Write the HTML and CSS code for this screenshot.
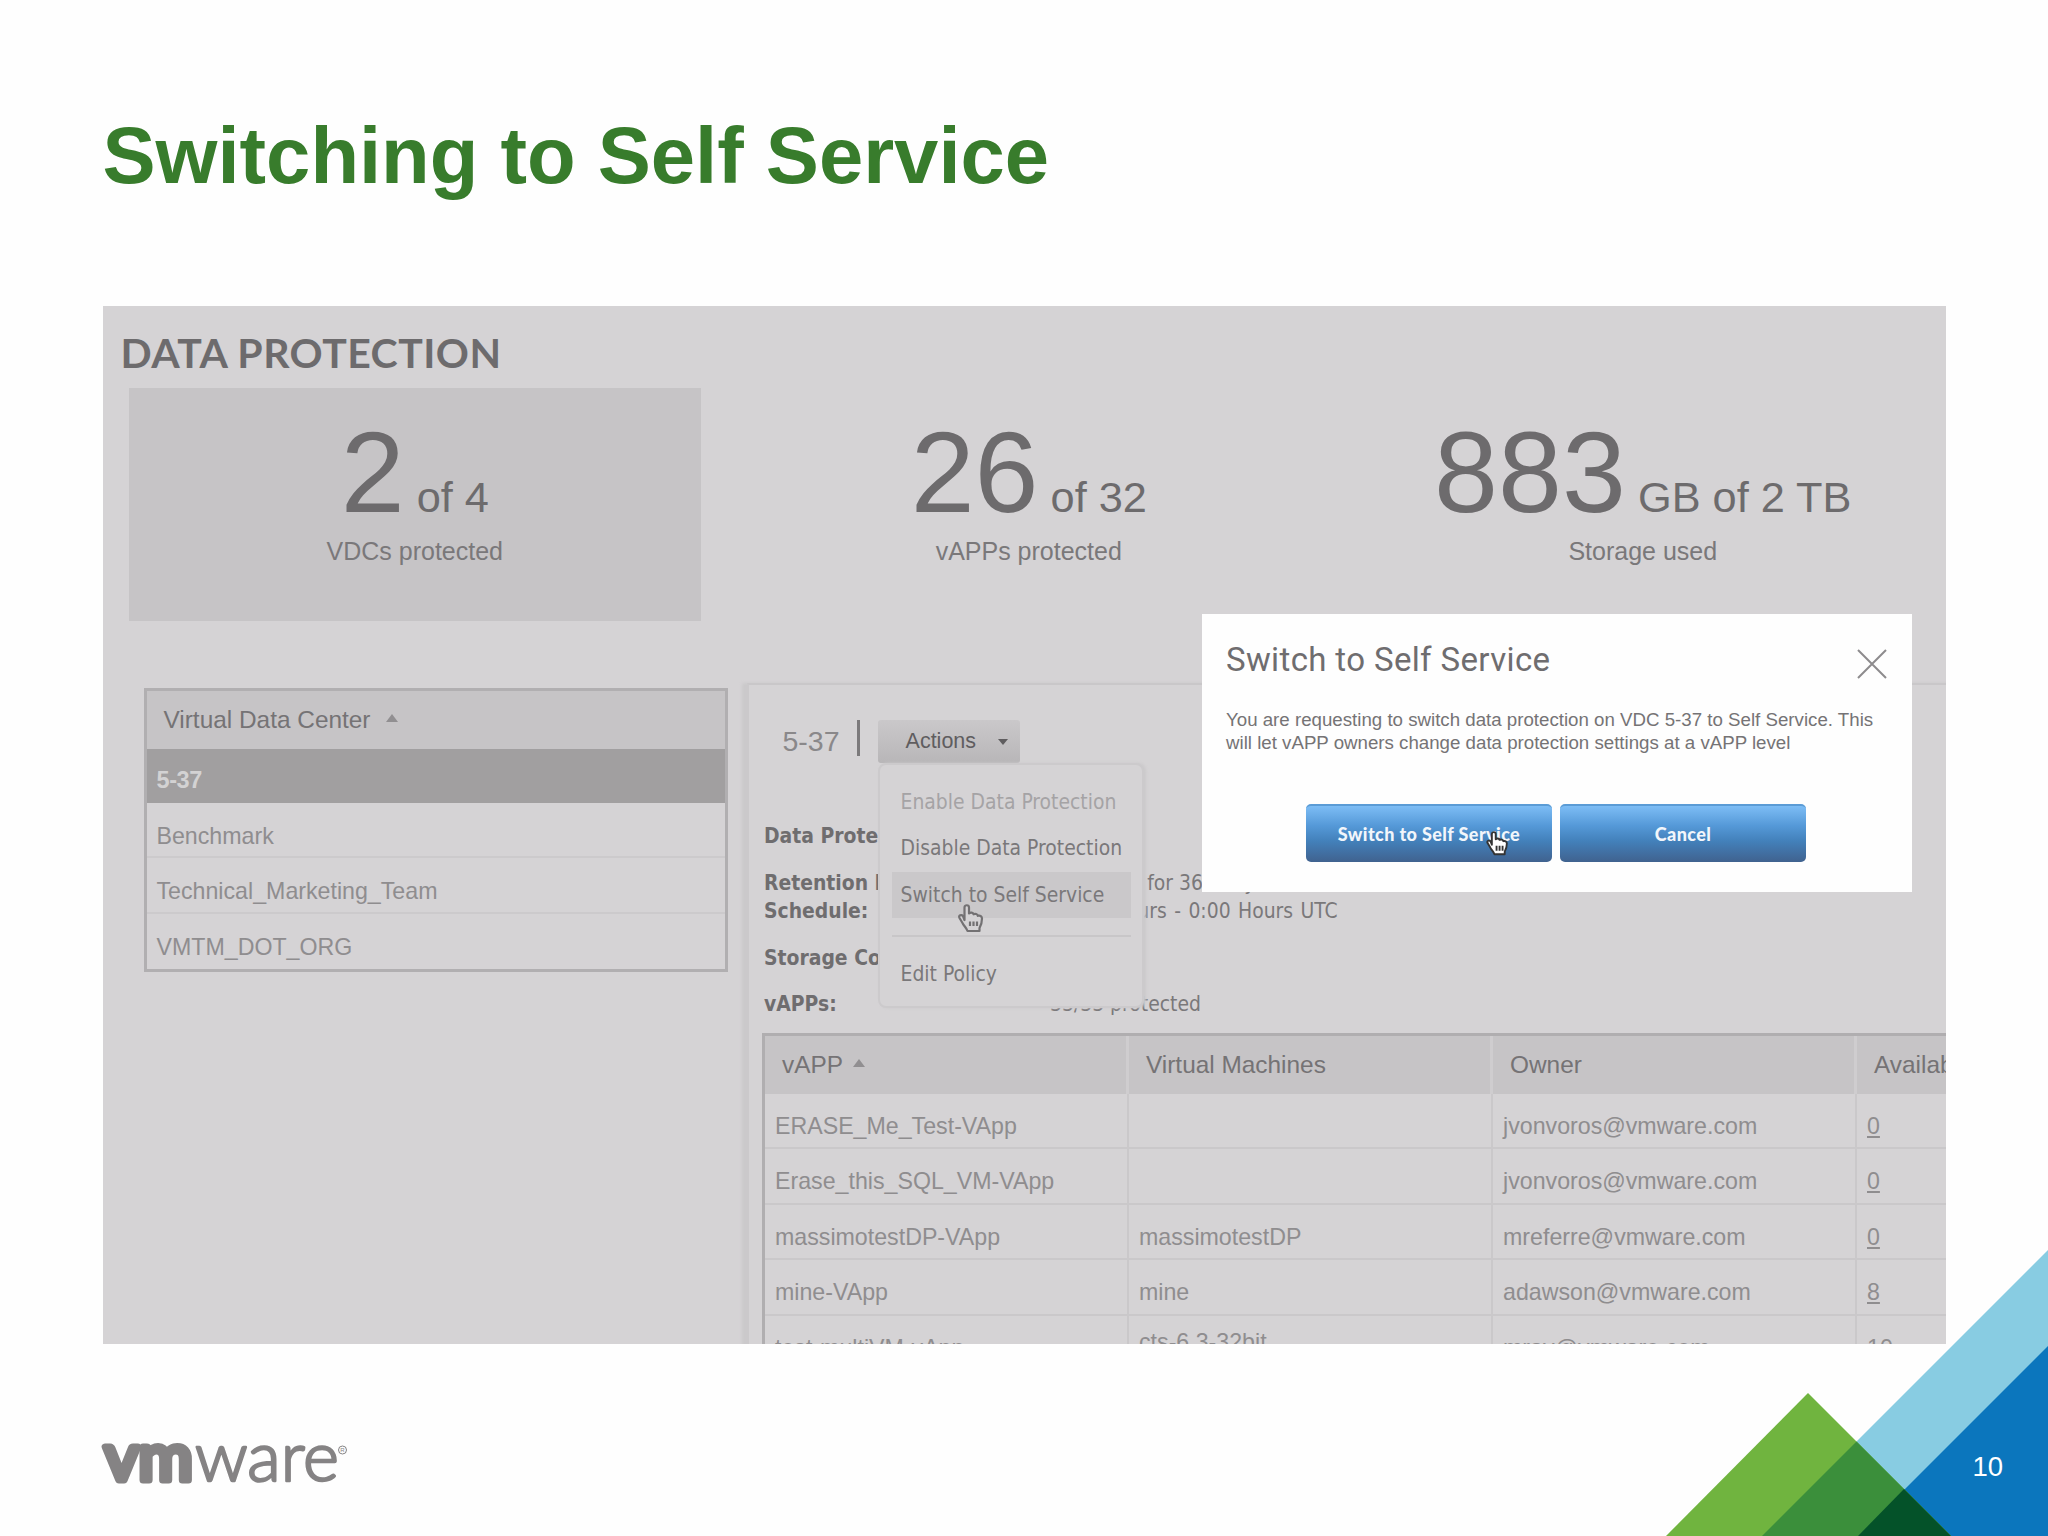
FILE: index.html
```html
<!DOCTYPE html>
<html lang="en">
<head>
    <meta charset="UTF-8">
    <meta name="viewport" content="width=device-width, initial-scale=1.0">
    <title>Switching to Self Service</title>
    <link rel="stylesheet" href="styles.css">
</head>
<body>
    <div class="slide">
        <h1 class="slide-title">Switching to Self Service</h1>

        <div class="screen">
            <h2 class="screen-title">DATA PROTECTION</h2>

            <div class="stats">
                <div class="stat active">
                    <div class="stat-value"><span class="big">2</span> of 4</div>
                    <div class="stat-label">VDCs protected</div>
                </div>
                <div class="stat">
                    <div class="stat-value"><span class="big">26</span> of 32</div>
                    <div class="stat-label">vAPPs protected</div>
                </div>
                <div class="stat">
                    <div class="stat-value"><span class="big">883</span> GB of 2 TB</div>
                    <div class="stat-label">Storage used</div>
                </div>
            </div>

            <div class="content">
                <div class="vdc-list">
                    <div class="vdc-header">Virtual Data Center <span class="sort"></span></div>
                    <div class="vdc-row selected">5-37</div>
                    <div class="vdc-row">Benchmark</div>
                    <div class="vdc-row">Technical_Marketing_Team</div>
                    <div class="vdc-row">VMTM_DOT_ORG</div>
                </div>

                <div class="panel">
                    <div class="panel-head">
                        <span class="vdc-name">5-37</span>
                        <span class="bar"></span>
                        <div class="dropdown">
                            <button type="button" class="actions-btn">Actions <span class="caret"></span></button>
                            <ul class="menu">
                                <li class="disabled">Enable Data Protection</li>
                                <li>Disable Data Protection</li>
                                <li class="hover">Switch to Self Service
                                    <svg class="cursor cursor-menu" viewBox="0 0 28 31">
                                        <path class="hand-dim" d="M8 17V4.500c0-3 4.500-3 4.500 0v6c1.500-1.500 4-1 4.500.8 1.500-1 4-.3 4.300 1.500 2-.8 4.200.3 4.200 2.700 0 4-.5 6-2.500 9.500V28H11c-1-3-3.500-5-5-8l-3-5c-1.200-2.500 1.800-4 3.500-2z"/>
                                        <path class="hand-dim" d="M13.500 18.500v4.500M17 18.500v4.500M20.500 18.500v4.500"/>
                                    </svg>
                                </li>
                                <li class="divider"></li>
                                <li>Edit Policy</li>
                            </ul>
                        </div>
                    </div>

                    <div class="details">
                        <div class="detail"><b>Data Protection:</b><span>Enabled</span></div>
                        <div class="detail-group">
                            <div class="detail retention"><b>Retention Policy:</b><span>Retained for 365 days</span></div>
                            <div class="detail schedule"><b>Schedule:</b><span>20:00 Hours - 0:00 Hours UTC</span></div>
                        </div>
                        <div class="detail"><b>Storage Consumed:</b><span></span></div>
                        <div class="detail"><b>vAPPs:</b><span>33/33 protected</span></div>
                    </div>

                    <table class="vapps">
                        <thead>
                            <tr>
                                <th>vAPP <span class="sort"></span></th>
                                <th>Virtual Machines</th>
                                <th>Owner</th>
                                <th>Available</th>
                            </tr>
                        </thead>
                        <tbody>
                            <tr><td>ERASE_Me_Test-VApp</td><td></td><td>jvonvoros@vmware.com</td><td><u>0</u></td></tr>
                            <tr><td>Erase_this_SQL_VM-VApp</td><td></td><td>jvonvoros@vmware.com</td><td><u>0</u></td></tr>
                            <tr><td>massimotestDP-VApp</td><td>massimotestDP</td><td>mreferre@vmware.com</td><td><u>0</u></td></tr>
                            <tr><td>mine-VApp</td><td>mine</td><td>adawson@vmware.com</td><td><u>8</u></td></tr>
                            <tr><td>test-multiVM-vApp</td><td class="two-line">cts-6.3-32bit</td><td>mray@vmware.com</td><td><u>10</u></td></tr>
                        </tbody>
                    </table>
                </div>
            </div>

            <div class="dialog">
                <div class="dialog-head">
                    <h3>Switch to Self Service</h3>
                    <svg class="close" viewBox="0 0 30 30"><path d="M1 1L29 29M29 1L1 29"/></svg>
                </div>
                <p>You are requesting to switch data protection on VDC 5-37 to Self Service. This<br>will let vAPP owners change data protection settings at a vAPP level</p>
                <div class="dialog-buttons">
                    <button type="button" class="btn">Switch to Self Service
                        <svg class="cursor cursor-btn" viewBox="0 0 28 31">
                            <path class="hand" d="M8 17V4.500c0-3 4.500-3 4.500 0v6c1.500-1.500 4-1 4.500.8 1.500-1 4-.3 4.300 1.500 2-.8 4.200.3 4.200 2.700 0 4-.5 6-2.500 9.500V28H11c-1-3-3.500-5-5-8l-3-5c-1.200-2.500 1.800-4 3.500-2z"/>
                            <path class="hand" d="M13.500 18v6M17 18v6M20.500 18v6"/>
                        </svg>
                    </button>
                    <button type="button" class="btn">Cancel</button>
                </div>
            </div>
        </div>

        <svg class="logo" viewBox="0 0 250 50">
            <text class="logo-vm" x="4.500" y="40" textLength="88" lengthAdjust="spacingAndGlyphs">vm</text>
            <text class="logo-ware" x="95" y="41" textLength="144" lengthAdjust="spacingAndGlyphs">ware</text>
            <circle class="logo-ring" cx="242.500" cy="10" r="4"/>
            <text class="logo-reg" x="242.500" y="12.200">R</text>
        </svg>

        <div class="corner">
            <svg viewBox="0 0 382 286">
                <polygon class="sky" points="382,0 382,286 96,286"/>
                <polygon class="blue" points="382,96 382,286 192,286"/>
                <polygon class="green" points="142,143 0,286 285,286"/>
                <polygon class="mid" points="190.500,191.500 96,286 285,286"/>
                <polygon class="dark" points="238,239 192,286 285,286"/>
            </svg>
            <span class="page-number">10</span>
        </div>
    </div>
</body>
</html>
```
FILE: styles.css
```css
* {
    box-sizing: border-box;
}
body {
    margin: 0;
    background-color: #fefefe;
    font-family: "Liberation Sans", Arial, sans-serif;
}
h1, h2, h3, p, ul {
    margin: 0;
    padding: 0;
}
.slide {
    position: relative;
    width: 2048px;
    height: 1536px;
    padding: 110px 102px 0;
    overflow: hidden;
}
.slide-title {
    padding-left: 0.5px;
    font-size: 79.6px;
    line-height: 92px;
    color: #387c2c;
}

/* application screen */
.screen {
    position: relative;
    width: 1843px;
    height: 1038px;
    margin: 104px 0 0 0.5px;
    padding-top: 23px;
    background-color: #d5d3d5;
    overflow: hidden;
}
.screen-title {
    margin: 0 0 10.5px 18px;
    font-family: Lato, sans-serif;
    font-size: 41px;
    line-height: 48px;
    letter-spacing: 0.45px;
    color: #6d6b6d;
}
.stats {
    display: grid;
    grid-template-columns: repeat(3, 571.5px);
    gap: 42.5px;
    margin-left: 26.5px;
}
.stat {
    height: 233px;
    padding-top: 26.5px;
    text-align: center;
}
.stat.active {
    background-color: #c6c4c6;
}
.stat-value {
    font-size: 43.3px;
    line-height: 116px;
    color: #6d6b6d;
}
.stat-value .big {
    font-size: 115px;
}
.stat-label {
    margin-top: -19.5px;
    font-size: 25px;
    line-height: 30px;
    color: #7a787a;
}
.content {
    display: flex;
    align-items: flex-start;
    gap: 19px;
    margin: 62px 0 0 41px;
}

/* list of data centers */
.vdc-list {
    flex: none;
    width: 584px;
    margin-top: 5px;
    border: 3px solid #b1afb1;
}
.vdc-header {
    height: 58px;
    padding-left: 17px;
    font-size: 24.4px;
    line-height: 58px;
    color: #757375;
    background-color: #c6c4c6;
}
.sort {
    display: inline-block;
    margin-left: 9px;
    border: 6px solid transparent;
    border-top: 0;
    border-bottom: 8px solid #918f91;
    vertical-align: 6px;
}
.vdc-row {
    height: 55.5px;
    padding: 11px 0 0 10px;
    font-size: 23.2px;
    line-height: 45px;
    color: #8f8d8f;
}
.vdc-row + .vdc-row {
    border-bottom: 2px solid #cccacc;
}
.vdc-row:last-child {
    border-bottom: 0;
}
.vdc-row.selected {
    height: 54px;
    padding-top: 9px;
    font-size: 23.5px;
    letter-spacing: -0.4px;
    font-weight: bold;
    color: #d3d2d3;
    background-color: #a19fa0;
}

/* details panel */
.panel {
    flex: none;
    width: 1300px;
    height: 720px;
    border-top: 2px solid #c9c7c9;
    border-left: 2px solid #cbc9cb;
    box-shadow: -5px 0 3px #cbc9cb;
}
.panel-head {
    display: flex;
    align-items: flex-start;
    height: 137.5px;
    padding: 35.5px 0 0 34px;
}
.vdc-name {
    font-size: 28.5px;
    line-height: 42px;
    color: #8a888a;
}
.bar {
    width: 3px;
    height: 36px;
    margin: 0 18px 0 17px;
    background-color: #7c7a7c;
}
.dropdown {
    position: relative;
}
.actions-btn {
    display: flex;
    align-items: center;
    width: 142px;
    height: 43px;
    padding: 0 0 0 28px;
    border: 0;
    border-radius: 3px;
    background: linear-gradient(#cac8ca, #b8b6b8);
    font-family: inherit;
    font-size: 21.5px;
    color: #5f5d5f;
}
.caret {
    margin-left: 22px;
    border: 5px solid transparent;
    border-top: 6px solid #5f5d5f;
    border-bottom: 0;
}
.menu {
    position: absolute;
    top: 43px;
    left: 0;
    z-index: 1;
    width: 266px;
    height: 245px;
    padding: 14px 11px 0 12px;
    border: 2px solid #cccacc;
    border-radius: 8px;
    background-color: #d5d3d5;
    box-shadow: 2px 0 3px #cbc9cb;
    list-style: none;
    font-family: "DejaVu Sans Condensed", "DejaVu Sans", sans-serif;
    font-stretch: condensed;
    font-size: 20.9px;
    color: #7a787a;
}
.menu li {
    position: relative;
    height: 46.4px;
    padding-left: 9px;
    line-height: 47px;
    white-space: nowrap;
}
.menu .disabled {
    color: #a5a3a5;
}
.menu .hover {
    background-color: #cac8ca;
}
.menu .divider {
    height: 0;
    margin: 17px 0 13.5px;
    border-top: 2px solid #c8c6c8;
}
.cursor {
    position: absolute;
    overflow: visible;
}
.cursor-menu {
    top: 31px;
    left: 64px;
    width: 29px;
    height: 31px;
}
.cursor path {
    stroke-width: 2.2;
    stroke-linejoin: round;
}
.hand-dim {
    fill: #d5d3d5;
    stroke: #737173;
}
.details {
    display: flex;
    flex-direction: column;
    gap: 18px;
    margin-left: 15.5px;
    font-family: "DejaVu Sans Condensed", "DejaVu Sans", sans-serif;
    font-stretch: condensed;
    font-size: 20.9px;
    line-height: 28.5px;
    color: #7a787a;
    white-space: nowrap;
}
.detail {
    display: flex;
}
.detail b {
    width: 286px;
    color: #6f6d6f;
}
.retention span {
    padding-left: 8px;
}
.schedule span {
    word-spacing: 1.5px;
}

/* vApp table */
.vapps {
    width: 1459px;
    margin: 14px 0 0 13px;
    border-top: 3px solid #b0aeb0;
    border-left: 3px solid #b0aeb0;
    border-spacing: 0;
    table-layout: fixed;
    text-align: left;
}
.vapps th {
    height: 58px;
    padding: 0 0 0 17.5px;
    border-right: 3px solid #cfcdcf;
    font-size: 24.4px;
    font-weight: normal;
    color: #757375;
    background-color: #c6c4c6;
}
.vapps .sort {
    margin-left: 4px;
}
.vapps td {
    height: 55.5px;
    padding: 11px 0 0 10.5px;
    border-right: 2px solid #cac8ca;
    border-bottom: 2px solid #cac8ca;
    font-size: 23.2px;
    line-height: 42px;
    color: #8f8d8f;
}
.vapps .two-line {
    padding: 0 0 1px 10.5px;
}

/* confirmation dialog */
.dialog {
    position: absolute;
    top: 308px;
    left: 1099.5px;
    width: 710px;
    height: 278px;
    padding: 24px 25px 0 24px;
    background-color: #fefefe;
    z-index: 2;
}
.dialog-head {
    display: flex;
    justify-content: space-between;
}
.dialog h3 {
    font-family: Roboto, sans-serif;
    font-size: 33px;
    font-weight: normal;
    line-height: 44px;
    letter-spacing: 0.36px;
    color: #6f6d6f;
}
.close {
    width: 30px;
    height: 30px;
    margin: 11px 0 0;
    fill: none;
    stroke: #8d8b8d;
    stroke-width: 2;
}
.dialog p {
    margin-top: 26px;
    font-size: 18.7px;
    line-height: 23px;
    color: #757375;
    white-space: nowrap;
}
.dialog-buttons {
    display: flex;
    gap: 8px;
    margin: 50px 0 0 80px;
}
.btn {
    position: relative;
    width: 246px;
    height: 58px;
    border: 0;
    border-top: 2px solid #5b9cd6;
    border-radius: 5px;
    background: linear-gradient(#7dbdf5, #5599d8 35%, #4381bb 62%, #40628f);
    font-family: Lato, sans-serif;
    font-size: 18px;
    font-weight: 900;
    letter-spacing: 0.4px;
    color: #f2f6fb;
}
.cursor-btn {
    top: 24px;
    left: 179px;
    width: 24px;
    height: 27px;
}
.hand {
    fill: #fff;
    stroke: #333;
}

/* footer */
.logo {
    position: absolute;
    top: 1440px;
    left: 100px;
    width: 250px;
    height: 50px;
}
.logo text {
    fill: #858384;
    stroke: #858384;
    stroke-linejoin: round;
}
.logo .logo-vm {
    font-family: Lato, sans-serif;
    font-size: 64px;
    font-weight: 400;
    stroke-width: 7;
}
.logo .logo-ware {
    font-family: Lato, sans-serif;
    font-size: 69px;
    font-weight: 300;
    stroke-width: 2.4;
}
.logo-ring {
    fill: none;
    stroke: #858384;
}
.logo .logo-reg {
    font-size: 6px;
    stroke: none;
    text-anchor: middle;
}
.corner {
    position: absolute;
    right: 0;
    bottom: 0;
    width: 382px;
    height: 286px;
}
.corner svg {
    display: block;
}
.sky { fill: #88cce2; }
.blue { fill: #0b76bd; }
.green { fill: #70b43f; }
.mid { fill: #3b8f3b; }
.dark { fill: #045229; }
.page-number {
    position: absolute;
    right: 45px;
    bottom: 53px;
    font-size: 27.5px;
    line-height: 32px;
    color: #fff;
}
```
